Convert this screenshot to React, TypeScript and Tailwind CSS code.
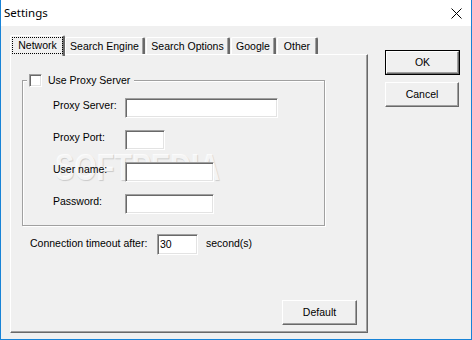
const sunken =
  "bg-white border border-t-[#a0a0a0] border-l-[#a0a0a0] border-r-white border-b-white shadow-[inset_1px_1px_0_#696969,inset_-1px_-1px_0_#e3e3e3]";
const raised =
  "bg-[#f0f0f0] border border-t-white border-l-white border-r-[#696969] border-b-[#696969] shadow-[inset_-1px_-1px_0_#a0a0a0] flex items-center justify-center";
const tab =
  "h-[17px] bg-[#f0f0f0] border-t border-l border-t-white border-l-white border-r-2 border-r-[#696969] shadow-[inset_-1px_0_0_#a0a0a0] rounded-t-[2px] flex items-center justify-center";

function Field({ label, width }: { label: string; width: string }) {
  return (
    <div className="flex items-center h-[20px]">
      <span className="w-[72px] pb-[5px]">{label}</span>
      <div className={`${sunken} h-[20px] ${width}`} />
    </div>
  );
}

export default function App() {
  return (
    <div className="w-[472px] h-[340px] flex flex-col border-x border-b border-[#1883d7] bg-[#f0f0f0] text-black text-[10.5px] leading-none font-['Liberation_Sans',Arial,sans-serif] overflow-hidden">
      {/* title bar */}
      <div className="h-[26px] shrink-0 bg-white flex items-center pl-[3px] pr-[9px] font-['Noto_Sans',sans-serif] text-[11.5px]">
        <span>Settings</span>
        <svg className="ml-auto mt-[1px]" width="11" height="11" viewBox="0 0 11 11">
          <path d="M0.5 0.5 L10.5 10.5 M10.5 0.5 L0.5 10.5" stroke="#000" strokeWidth="1" />
        </svg>
      </div>

      <div className="flex-1 flex pl-[9px] pt-[9px]">
        {/* tabs + panel */}
        <div className="w-[358px] flex flex-col">
          <div className="h-[19px] flex items-end">
            <div className="relative z-10 w-[55px] h-[21px] -mb-[2px] bg-[#f0f0f0] border-t border-l border-t-white border-l-white border-r-2 border-r-[#696969] shadow-[inset_-1px_0_0_#a0a0a0] rounded-t-[2px] pl-[1px] pt-[1px] pb-[2px] flex">
              <div className="flex-1 border border-dotted border-black flex items-center justify-center">
                Network
              </div>
            </div>
            <div className={`${tab} w-[80px]`}>Search Engine</div>
            <div className={`${tab} w-[84px] ml-[1px]`}>Search Options</div>
            <div className={`${tab} w-[45px] ml-[1px]`}>Google</div>
            <div className={`${tab} w-[41px] ml-[1px]`}>Other</div>
          </div>

          <div className="relative h-[279px] flex flex-col border border-t-white border-l-white border-r-[#696969] border-b-[#696969] shadow-[inset_-1px_-1px_0_#a0a0a0]">
            {/* watermark, painted under the controls */}
            <div className="absolute left-[44px] top-[95px] origin-left scale-x-[0.8] text-[36px] font-bold text-white/80 [text-shadow:1px_1px_1px_rgba(0,0,0,0.16)] pointer-events-none select-none">
              SOFTPEDIA
            </div>

            {/* group box */}
            <div className="relative ml-[11px] mt-[25px] w-[303px] h-[146px] border border-[#a0a0a0] shadow-[inset_1px_1px_0_#fff,1px_1px_0_#fff] pl-[30px] pt-[17px] flex flex-col gap-[12px]">
              <div className="absolute left-[4px] -top-[7px] h-[13px] bg-[#f0f0f0] pl-[2px] pr-[4px] flex items-center gap-[6px]">
                <div className={`${sunken} w-[13px] h-[13px]`} />
                <span>Use Proxy Server</span>
              </div>
              <Field label="Proxy Server:" width="w-[153px]" />
              <Field label="Proxy Port:" width="w-[40px]" />
              <Field label="User name:" width="w-[89px]" />
              <Field label="Password:" width="w-[89px]" />
            </div>

            {/* timeout */}
            <div className="flex items-center ml-[19px] mt-[8px] h-[21px]">
              <span className="w-[127px] pb-[2px]">Connection timeout after:</span>
              <div className={`${sunken} w-[41px] h-[21px] pl-[2px] flex items-center`}>30</div>
              <span className="ml-[8px] pb-[2px]">second(s)</span>
            </div>

            <div className={`${raised} mt-auto self-end mr-[10px] mb-[7px] w-[75px] h-[25px]`}>
              Default
            </div>
          </div>
        </div>

        {/* buttons */}
        <div className="ml-[17px] mt-[15px] flex flex-col gap-[7px]">
          <div className="w-[75px] h-[25px] border border-black flex">
            <div className={`${raised} flex-1`}>OK</div>
          </div>
          <div className={`${raised} w-[74px] h-[25px]`}>Cancel</div>
        </div>
      </div>
    </div>
  );
}
